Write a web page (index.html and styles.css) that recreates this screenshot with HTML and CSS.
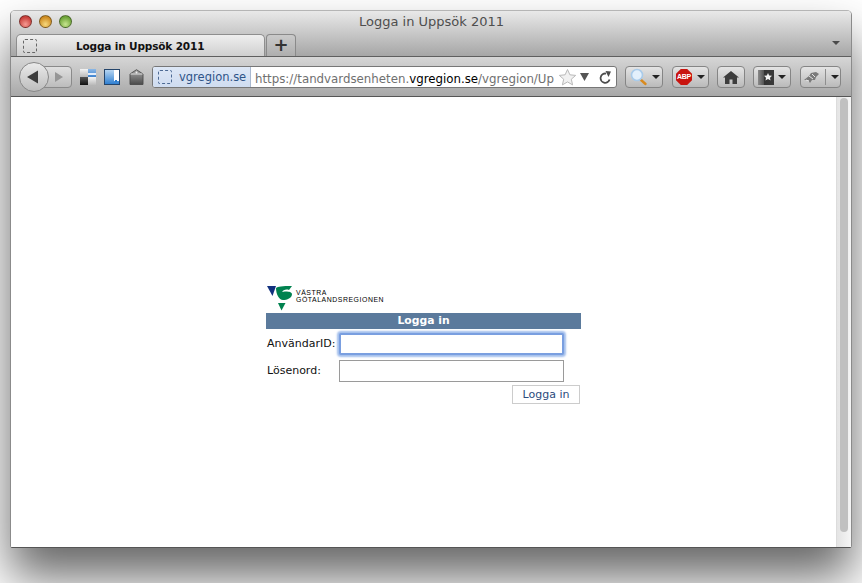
FILE: index.html
```html
<!DOCTYPE html>
<html lang="sv">
<head>
<meta charset="utf-8">
<title>Logga in Uppsök 2011</title>
<link rel="stylesheet" href="styles.css">
</head>
<body>
<div class="window">
  <header class="titlebar">
    <div class="title-row">
      <div class="lights">
        <span class="light red"></span><span class="light yellow"></span><span class="light green"></span>
      </div>
      <div class="window-title">Logga in Uppsök 2011</div>
    </div>
    <div class="tab-row">
      <div class="tab">
        <span class="favicon"></span>
        <span class="tab-title">Logga in Uppsök 2011</span>
      </div>
      <div class="new-tab">+</div>
      <span class="tab-menu"></span>
    </div>
  </header>
  <nav class="toolbar">
    <div class="nav-buttons">
      <div class="back"><svg width="16" height="16" viewBox="0 0 16 16"><path d="M2 8 13 1.500v13z" fill="#3d3d3d"/></svg></div>
      <div class="forward"><svg width="10" height="12" viewBox="0 0 10 12"><path d="M1 1l8 5-8 5z" fill="#969696"/></svg></div>
    </div>
    <svg class="tool-icon" width="16" height="16" viewBox="0 0 16 16">
      <defs>
        <linearGradient id="q1" x1="0" y1="0" x2="0" y2="1"><stop offset="0" stop-color="#f4f4f4"/><stop offset="1" stop-color="#b9b9b9"/></linearGradient>
        <linearGradient id="q2" x1="0" y1="0" x2="0" y2="1"><stop offset="0" stop-color="#8cb8e6"/><stop offset="1" stop-color="#3f83cf"/></linearGradient>
        <linearGradient id="q3" x1="0" y1="0" x2="0" y2="1"><stop offset="0" stop-color="#555"/><stop offset="1" stop-color="#111"/></linearGradient>
      </defs>
      <rect width="8" height="8" fill="url(#q1)"/>
      <rect x="8" width="8" height="8" fill="url(#q2)"/>
      <rect y="8" width="8" height="8" fill="url(#q3)"/>
      <rect x="8" y="8" width="8" height="8" fill="url(#q1)"/>
      <rect x="8" y="4" width="8" height="2" fill="#e5eefa"/>
    </svg>
    <svg class="tool-icon icon-gap-a" width="16" height="16" viewBox="0 0 16 16">
      <defs><linearGradient id="blue" x1="0" y1="0" x2="0" y2="1"><stop offset="0" stop-color="#bcd9f3"/><stop offset="1" stop-color="#2a7cd0"/></linearGradient></defs>
      <rect x=".5" y=".5" width="15" height="15" fill="url(#blue)" stroke="#25456b"/>
      <rect x="10" y="1" width="5" height="11" fill="#fff"/>
      <rect x="11" y="11" width="2" height="2" fill="#2a7cd0"/>
    </svg>
    <svg class="tool-icon icon-gap-b" width="15" height="16" viewBox="0 0 15 16">
      <defs><linearGradient id="pkg" x1="0" y1="0" x2="0" y2="1"><stop offset="0" stop-color="#a8a8a8"/><stop offset="1" stop-color="#4a4a4a"/></linearGradient></defs>
      <path d="M1 5 7.500.7 14 5v10.500H1z" fill="url(#pkg)" stroke="#4b4b4b" stroke-width=".9"/>
      <path d="M1.500 5h12" stroke="#ddd"/>
      <circle cx="7.500" cy="3.400" r="1" fill="#eee"/>
    </svg>
    <div class="address">
      <div class="site"><span class="favicon site-favicon"></span><span class="site-name">vgregion.se</span></div>
      <div class="url"><span class="url-text">https://tandvardsenheten.<b>vgregion.se</b>/vgregion/Up</span></div>
      <svg class="star" width="19" height="18" viewBox="0 0 19 18"><path d="M9.500 1.500l2.400 5.300 5.800.6-4.400 3.800 1.300 5.700-5.100-3-5.100 3 1.300-5.700L1.300 7.400l5.800-.6z" fill="#f1f1f1" stroke="#b9b9b9"/></svg>
      <svg class="star-menu" width="9" height="8" viewBox="0 0 9 8"><path d="M0 0h9L4.500 8z" fill="#555"/></svg>
      <svg class="reload" width="13" height="13" viewBox="0 0 13 13"><path d="M10.600 8.500A4.600 4.600 0 1 1 7 2.600" fill="none" stroke="#4c4c4c" stroke-width="1.800"/><path d="M6.500 0 12 .5 9.500 6z" fill="#4c4c4c"/></svg>
    </div>
    <div class="btn btn-search">
      <svg width="20" height="18" viewBox="0 0 20 18"><path d="M11.500 11.500l5 4.500" stroke="#d98a1e" stroke-width="2.400" stroke-linecap="round"/><circle cx="8" cy="7" r="5.500" fill="#e3f0fc" stroke="#a9cbea" stroke-width="1.600"/></svg>
      <span class="caret"></span>
    </div>
    <div class="btn btn-abp">
      <span class="abp">ABP</span>
      <span class="caret"></span>
    </div>
    <div class="btn btn-home">
      <svg width="16" height="13" viewBox="0 0 16 13"><path d="M8 0 16 6.500h-2V13H9.500V8.500h-3V13H2V6.500H0z" fill="#3d3d3d"/></svg>
    </div>
    <div class="btn btn-bookmarks">
      <svg width="16" height="15" viewBox="0 0 16 15"><defs><linearGradient id="bk" x1="0" y1="0" x2="1" y2="0"><stop offset="0" stop-color="#8a8a8a"/><stop offset=".35" stop-color="#555"/><stop offset=".4" stop-color="#333"/><stop offset="1" stop-color="#3a3a3a"/></linearGradient></defs><rect width="16" height="15" fill="url(#bk)"/><path d="M10 3l1.200 2.500 2.800.3-2 1.900.5 2.800-2.500-1.400-2.500 1.400.5-2.800-2-1.900 2.800-.3z" fill="#f0f0f0"/></svg>
      <span class="caret"></span>
    </div>
    <div class="btn btn-ext">
      <svg width="17" height="13" viewBox="0 0 17 13"><path d="M1 9l5-4 2-3 5-1 3 2-3 3-1 3-3 0-2 3-2-3z" fill="#7a7a7a"/><path d="M6 5l4 3M9 3l3 3M3 9l3 1" stroke="#e4e4e4"/></svg>
      <span class="ext-sep"></span>
      <span class="caret"></span>
    </div>
  </nav>
  <main class="viewport">
    <div class="page">
      <form class="login">
        <div class="logo">
          <svg width="29" height="26" viewBox="0 0 29 26">
            <path d="M0 1h9L5.500 11z" fill="#12317f"/>
            <path d="M9 3C11 1.500 15 1 25 1l-3 4c-3-1-6 0-7 2 2-1 10-1 10 2 0 4-5 6-9 6-4 0-7-6-7-12z" fill="#00824f"/>
            <path d="M11 18h7.500L14.500 25.500z" fill="#00824f"/>
          </svg>
          <div class="logo-text"><span>VÄSTRA</span><span>GÖTALANDSREGIONEN</span></div>
        </div>
        <div class="login-head">Logga in</div>
        <div class="field field-first">
          <label class="field-label" for="uid">AnvändarID:</label>
          <input class="text-input focused" id="uid" type="text">
        </div>
        <div class="field">
          <label class="field-label" for="pwd">Lösenord:</label>
          <input class="text-input" id="pwd" type="password">
        </div>
        <div class="actions"><button class="submit" type="button">Logga in</button></div>
      </form>
    </div>
    <div class="scrollbar"><div class="thumb"></div></div>
  </main>
</div>
</body>
</html>
```
FILE: styles.css
```css
* { box-sizing: border-box; }
html, body { margin: 0; height: 583px; overflow: hidden; }
body { background: #fff; padding: 10px 10px 35px 10px; font-family: "DejaVu Sans", sans-serif; }

.window {
  height: 538px;
  display: flex;
  flex-direction: column;
  border: 1px solid #8b8b8b;
  border-top-color: #b5b5b5;
  border-bottom-color: #555;
  border-radius: 5px 5px 2px 2px;
  box-shadow: 0 29px 48px rgba(0, 0, 0, .6);
  overflow: hidden;
}

.titlebar {
  height: 46px;
  flex: none;
  background: linear-gradient(#e9e9e9, #a6a6a6);
  border-bottom: 1px solid #5f5f5f;
}
.title-row { height: 23px; display: flex; align-items: center; padding: 0 0 2px 8px; }
.lights { display: flex; gap: 7px; width: 340px; flex: none; }
.light { width: 13px; height: 13px; border-radius: 50%; border: 1px solid rgba(0, 0, 0, .4); }
.red { background: radial-gradient(circle at 50% 75%, #f69a93, #c9413c 70%); }
.yellow { background: radial-gradient(circle at 50% 75%, #f7d97d, #cf8d23 70%); }
.green { background: radial-gradient(circle at 50% 75%, #c7e58f, #6fa53a 70%); }
.window-title { font-size: 13px; color: #4e4e4e; white-space: nowrap; }

.tab-row { height: 22px; display: flex; align-items: flex-end; padding-left: 5px; position: relative; }
.tab {
  width: 249px;
  height: 22px;
  display: flex;
  align-items: center;
  background: linear-gradient(#efefef, #cfcfcf);
  border: 1px solid #8e8e8e;
  border-bottom: 0;
  border-radius: 5px 5px 0 0;
  padding: 1px 0 0 6px;
}
.favicon {
  width: 14px;
  height: 14px;
  flex: none;
  border: 1px dashed #666;
  border-radius: 2px;
}
.tab-title { margin-left: 39px; font-size: 10.500px; letter-spacing: -.15px; font-weight: bold; color: #111; white-space: nowrap; }
.new-tab {
  width: 30px;
  height: 22px;
  margin-left: 1px;
  background: linear-gradient(#cacaca, #aeaeae);
  border: 1px solid #8a8a8a;
  border-bottom: 0;
  border-radius: 4px 4px 0 0;
  color: #333;
  font-size: 18px;
  font-weight: bold;
  line-height: 20px;
  text-align: center;
}
.tab-menu {
  position: absolute;
  right: 11px;
  top: 7px;
  border: 4px solid transparent;
  border-top: 4px solid #4a4a4a;
}

.toolbar {
  height: 40px;
  flex: none;
  display: flex;
  align-items: center;
  padding: 1px 10px 0 8px;
  background: linear-gradient(#d6d6d6, #a8a8a8);
  border-bottom: 1px solid #555;
}
.nav-buttons { width: 53px; height: 30px; flex: none; display: flex; align-items: center; position: relative; }
.back {
  width: 30px;
  height: 30px;
  flex: none;
  border-radius: 50%;
  border: 1px solid #888;
  background: linear-gradient(#eaeaea, #bdbdbd);
  display: flex;
  align-items: center;
  justify-content: center;
  position: relative;
  z-index: 1;
  padding-right: 3px;
}
.forward {
  width: 30px;
  height: 22px;
  margin-left: -7px;
  border: 1px solid #8a8a8a;
  border-radius: 0 4px 4px 0;
  background: linear-gradient(#e0e0e0, #bcbcbc);
  display: flex;
  align-items: center;
  padding-left: 11px;
}
.tool-icon { flex: none; margin-left: 8px; }
.icon-gap-b { margin-left: 9px; }

.address {
  width: 465px;
  height: 22px;
  flex: none;
  margin-left: 8px;
  display: flex;
  align-items: center;
  background: #fff;
  border: 1px solid #777;
  border-radius: 3px;
  overflow: hidden;
}
.site {
  width: 98px;
  height: 100%;
  flex: none;
  display: flex;
  align-items: center;
  background: linear-gradient(#dde7f6, #cfdcf0);
  border-right: 1px solid #a9b9d0;
  padding-left: 5px;
}
.site-favicon { border-color: #4d6a94; }
.site-name { margin-left: 7px; font-size: 11.500px; line-height: 14px; color: #2f5488; white-space: nowrap; }
.url { width: 303px; flex: none; overflow: hidden; padding-left: 4px; }
.url-text { font-size: 11.800px; color: #6f6f6f; white-space: nowrap; }
.url-text b { font-weight: normal; color: #000; }
.star { flex: none; margin-left: 4px; }
.star-menu { flex: none; margin-left: 3px; }
.reload { flex: none; margin-left: 10px; }

.btn {
  height: 22px;
  flex: none;
  display: flex;
  align-items: center;
  justify-content: center;
  border: 1px solid #858585;
  border-radius: 4px;
  background: linear-gradient(#e4e4e4, #bababa);
}
.caret { width: 0; height: 0; border: 4px solid transparent; border-top: 4px solid #222; border-bottom: 0; flex: none; }
.btn-search { width: 38px; margin-left: 8px; gap: 3px; }
.btn-abp { width: 37px; margin-left: 9px; gap: 5px; }
.btn-home { width: 28px; margin-left: 8px; }
.btn-bookmarks { width: 38px; margin-left: 8px; gap: 4px; }
.btn-ext { width: 41px; margin-left: 9px; gap: 5px; }
.ext-sep { width: 1px; height: 16px; background: #8e8e8e; flex: none; }
.abp {
  width: 16px;
  height: 16px;
  flex: none;
  clip-path: polygon(30% 0, 70% 0, 100% 30%, 100% 70%, 70% 100%, 30% 100%, 0 70%, 0 30%);
  background: #c9140f;
  color: #fff;
  font-family: "Liberation Sans", sans-serif;
  font-size: 7px;
  font-weight: bold;
  line-height: 16px;
  text-align: center;
  letter-spacing: -.2px;
}

.viewport { flex: 1; display: flex; background: #fff; min-height: 0; }
.page { flex: 1; padding: 188px 0 0 255px; }
.login { width: 315px; }
.logo { height: 28px; display: flex; padding-left: 1px; }
.logo-text {
  display: flex;
  flex-direction: column;
  gap: 1px;
  margin-top: 5px;
  font-family: "Liberation Sans", sans-serif;
  font-size: 6.900px;
  line-height: 6px;
  letter-spacing: .55px;
  color: #000;
  white-space: nowrap;
}
.login-head {
  height: 16px;
  background: #5b7a9c;
  color: #fff;
  font-size: 10.800px;
  font-weight: bold;
  line-height: 16px;
  text-align: center;
}
.field { display: flex; align-items: center; height: 27px; }
.field-first { margin-top: 1px; }
.field-label { width: 73px; flex: none; padding-left: 1px; font-size: 11px; color: #111; white-space: nowrap; }
.text-input {
  width: 225px;
  height: 22px;
  margin: 0;
  padding: 0;
  background: #fff;
  border: 1px solid #9a9a9a;
  outline: none;
}
.focused {
  border: 2px solid #7a9fe0;
  border-radius: 2px;
  box-shadow: 0 0 2px 2px #a3bfec;
}
.actions { display: flex; justify-content: flex-end; padding: 1px 1px 0 0; }
.submit {
  width: 68px;
  height: 19px;
  padding: 0;
  background: #fff;
  border: 1px solid #ccc;
  color: #2c4a7c;
  font-family: "DejaVu Sans", sans-serif;
  font-size: 11px;
}

.scrollbar {
  width: 15px;
  flex: none;
  padding: 1px 3px 15px;
  background: linear-gradient(90deg, #e4e4e4, #f5f5f5);
  border-left: 1px solid #dcdcdc;
}
.thumb { height: 100%; border-radius: 5px; background: #c0c0c0; }
```
